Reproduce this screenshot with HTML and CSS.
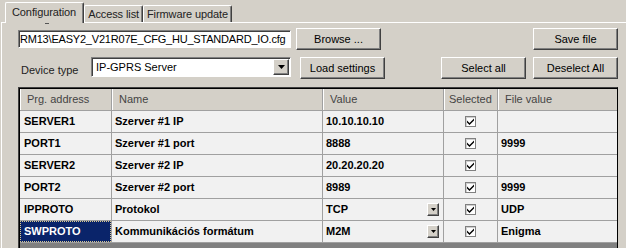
FILE: index.html
```html
<!DOCTYPE html>
<html lang="hu">
<head>
  <meta charset="UTF-8">
  <title>Configuration</title>
  <link rel="stylesheet" href="styles.css">
</head>
<body>
  <div class="window">
    <div class="tabs">
      <div class="tab active"><span class="tab-label">Configuration</span></div>
      <div class="tab">Access list</div>
      <div class="tab">Firmware update</div>
    </div>

    <div class="panel">
      <div class="row row-file">
        <div class="textbox">RM13\EASY2_V21R07E_CFG_HU_STANDARD_IO.cfg</div>
        <button class="btn btn-browse">Browse ...</button>
        <div class="spacer"></div>
        <button class="btn">Save file</button>
      </div>

      <div class="row row-device">
        <span class="label">Device type</span>
        <div class="combo">
          <span class="combo-text">IP-GPRS Server</span>
          <span class="drop big"><svg width="7" height="4" viewBox="0 0 7 4"><path d="M0 0h7L3.5 4z" fill="#000"/></svg></span>
        </div>
        <button class="btn btn-load">Load settings</button>
        <div class="spacer"></div>
        <button class="btn">Select all</button>
        <button class="btn">Deselect All</button>
      </div>

      <div class="grid-wrap">
        <div class="grid">
          <div class="head">Prg. address</div>
          <div class="head">Name</div>
          <div class="head">Value</div>
          <div class="head head-sel">Selected</div>
          <div class="head">File value</div>

          <div class="cell addr">SERVER1</div>
          <div class="cell">Szerver #1 IP</div>
          <div class="cell">10.10.10.10</div>
          <div class="cell check"><span class="box"><svg width="7" height="7" viewBox="0 0 7 7"><path d="M0 2.5l2.5 2.5L7 0.5v2L2.5 7 0 4.5z" fill="#000"/></svg></span></div>
          <div class="cell"></div>

          <div class="cell addr">PORT1</div>
          <div class="cell">Szerver #1 port</div>
          <div class="cell">8888</div>
          <div class="cell check"><span class="box"><svg width="7" height="7" viewBox="0 0 7 7"><path d="M0 2.5l2.5 2.5L7 0.5v2L2.5 7 0 4.5z" fill="#000"/></svg></span></div>
          <div class="cell">9999</div>

          <div class="cell addr">SERVER2</div>
          <div class="cell">Szerver #2 IP</div>
          <div class="cell">20.20.20.20</div>
          <div class="cell check"><span class="box"><svg width="7" height="7" viewBox="0 0 7 7"><path d="M0 2.5l2.5 2.5L7 0.5v2L2.5 7 0 4.5z" fill="#000"/></svg></span></div>
          <div class="cell"></div>

          <div class="cell addr">PORT2</div>
          <div class="cell">Szerver #2 port</div>
          <div class="cell">8989</div>
          <div class="cell check"><span class="box"><svg width="7" height="7" viewBox="0 0 7 7"><path d="M0 2.5l2.5 2.5L7 0.5v2L2.5 7 0 4.5z" fill="#000"/></svg></span></div>
          <div class="cell">9999</div>

          <div class="cell addr">IPPROTO</div>
          <div class="cell">Protokol</div>
          <div class="cell value-combo">TCP<span class="drop small"><svg width="5" height="3" viewBox="0 0 5 3"><path d="M0 0h5L2.5 3z" fill="#000"/></svg></span></div>
          <div class="cell check"><span class="box"><svg width="7" height="7" viewBox="0 0 7 7"><path d="M0 2.5l2.5 2.5L7 0.5v2L2.5 7 0 4.5z" fill="#000"/></svg></span></div>
          <div class="cell">UDP</div>

          <div class="cell addr current">SWPROTO</div>
          <div class="cell">Kommunikációs formátum</div>
          <div class="cell value-combo">M2M<span class="drop small"><svg width="5" height="3" viewBox="0 0 5 3"><path d="M0 0h5L2.5 3z" fill="#000"/></svg></span></div>
          <div class="cell check"><span class="box"><svg width="7" height="7" viewBox="0 0 7 7"><path d="M0 2.5l2.5 2.5L7 0.5v2L2.5 7 0 4.5z" fill="#000"/></svg></span></div>
          <div class="cell">Enigma</div>
        </div>
      </div>
    </div>
  </div>
</body>
</html>
```

FILE: styles.css
```css
:root {
  --face: #d4d0c8;
  --shadow: #808080;
  --dark: #404040;
  --cell: #f1f1f1;
  --line: #a0a0a0;
  --select: #0a246a;
}

body {
  margin: 0;
  background-color: var(--face);
  font-family: "Liberation Sans", Arial, sans-serif;
  font-size: 11px;
  color: #000;
}

.window {
  width: 626px;
  height: 248px;
  overflow: hidden;
}

/* tabs */
.tabs {
  display: flex;
  align-items: flex-end;
  height: 22px;
  padding-left: 5px;
  position: relative;
  z-index: 1;
}

.tab {
  height: 16px;
  padding: 0 3px;
  line-height: 16px;
  border-top: 1px solid #fff;
  border-left: 1px solid #fff;
  border-right: 1px solid var(--dark);
  box-shadow: inset -1px 0 0 var(--shadow);
  border-radius: 2px 2px 0 0;
  color: #222;
  letter-spacing: -0.1px;
}

.tab.active {
  height: 20px;
  margin-bottom: -1px;
  padding: 0 7px 0 6px;
  line-height: 18px;
  background-color: var(--face);
}

.tab-label {
  position: relative;
}

.tab-label::after {
  content: "";
  position: absolute;
  left: 33px;
  top: 17px;
  width: 4px;
  border-top: 1px solid #555;
}

.panel {
  border-top: 1px solid #fff;
  margin-left: 1px;
  border-left: 1px solid #fff;
  padding: 5px 0 0 16px;
  height: 230px;
}

/* toolbar rows */
.row {
  display: flex;
  width: 600px;
}

.row-file {
  height: 22px;
  align-items: flex-start;
}

.row-device {
  height: 22px;
  margin-top: 7px;
  align-items: flex-start;
}

.spacer {
  flex: 1;
}

.textbox {
  width: 270px;
  height: 16px;
  margin-top: 2px;
  padding-left: 1px;
  line-height: 16px;
  letter-spacing: -0.2px;
  background-color: #fff;
  border-top: 1px solid var(--shadow);
  border-left: 1px solid var(--shadow);
  border-right: 1px solid #fff;
  border-bottom: 1px solid #fff;
  box-shadow: inset 1px 1px 0 var(--dark);
  white-space: nowrap;
  overflow: hidden;
}

.btn {
  width: 85px;
  height: 22px;
  padding: 0;
  font-family: inherit;
  font-size: 11px;
  color: #000;
  background-color: var(--face);
  border-top: 1px solid #fff;
  border-left: 1px solid #fff;
  border-right: 1px solid var(--dark);
  border-bottom: 1px solid var(--dark);
  box-shadow: inset -1px -1px 0 var(--shadow);
  margin-left: 7px;
}

.btn-browse {
  margin-left: 5px;
}

.btn-load {
  margin-left: 9px;
}

.label {
  width: 70px;
  padding-left: 3px;
  line-height: 27px;
  color: #222;
}

.combo {
  width: 196px;
  height: 16px;
  padding: 1px;
  display: flex;
  align-items: center;
  background-color: #fff;
  border-top: 1px solid var(--shadow);
  border-left: 1px solid var(--shadow);
  border-right: 1px solid #fff;
  border-bottom: 1px solid #fff;
  box-shadow: inset 1px 1px 0 var(--dark);
}

.combo-text {
  flex: 1;
  padding-left: 3px;
}

.drop {
  display: flex;
  align-items: center;
  justify-content: center;
  box-sizing: border-box;
  background-color: var(--face);
  border-top: 1px solid #fff;
  border-left: 1px solid #fff;
  border-right: 1px solid var(--dark);
  border-bottom: 1px solid var(--dark);
  box-shadow: inset -1px -1px 0 var(--shadow);
}

.drop.big {
  width: 16px;
  height: 16px;
}

.drop.small {
  width: 12px;
  height: 13px;
}

/* grid */
.grid-wrap {
  width: 597px;
  height: 160px;
  margin-top: 8px;
  background-color: var(--shadow);
  border-top: 1px solid var(--dark);
  border-left: 1px solid var(--dark);
  border-right: 1px solid #000;
  box-shadow: inset 1px 1px 0 #000;
  padding: 1px 0 0 1px;
}

.grid {
  display: grid;
  grid-template-columns: 91px 210px 120px 53px 1fr;
  grid-auto-rows: 21px;
  gap: 1px;
  padding-bottom: 1px;
  background-color: var(--line);
}

.head {
  background-color: var(--face);
  color: #444;
  padding-left: 6px;
  line-height: 21px;
  border-left: 1px solid #fff;
}

.head-sel {
  padding-left: 4px;
}

.cell {
  background-color: var(--cell);
  font-weight: bold;
  padding-left: 3px;
  line-height: 21px;
  white-space: nowrap;
  overflow: hidden;
}

.cell.addr {
  padding-left: 4px;
}

.cell.current {
  background-color: var(--select);
  color: #fff;
  outline: 1px dotted #d8c890;
  outline-offset: -1px;
}

.value-combo {
  display: flex;
  align-items: center;
  justify-content: space-between;
  padding-right: 4px;
}

.check {
  display: flex;
  align-items: center;
  justify-content: center;
  padding-left: 0;
}

.box {
  width: 9px;
  height: 9px;
  display: flex;
  align-items: center;
  justify-content: center;
  background-color: #fff;
  border: 1px solid var(--shadow);
  box-shadow: inset 1px 1px 0 #d0d0d0;
}
```
